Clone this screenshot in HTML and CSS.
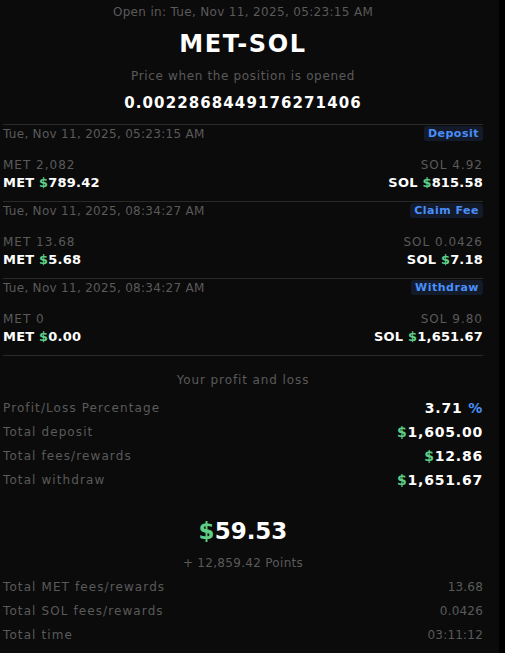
FILE: index.html
```html
<!DOCTYPE html>
<html>
<head>
<meta charset="utf-8">
<link rel="stylesheet" href="styles.css">
</head>
<body>
<div class="page">
  <div class="panel">
    <div class="open">Open in: Tue, Nov 11, 2025, 05:23:15 AM</div>
    <div class="pair">MET-SOL</div>
    <div class="label">Price when the position is opened</div>
    <div class="price">0.0022868449176271406</div>

    <div class="tx">
      <div class="tx-head"><span class="date">Tue, Nov 11, 2025, 05:23:15 AM</span><span class="badge">Deposit</span></div>
      <div class="tx-row small"><span>MET 2,082</span><span>SOL 4.92</span></div>
      <div class="tx-row big"><span>MET <b class="usd">$</b>789.42</span><span>SOL <b class="usd">$</b>815.58</span></div>
    </div>
    <div class="tx">
      <div class="tx-head"><span class="date">Tue, Nov 11, 2025, 08:34:27 AM</span><span class="badge">Claim Fee</span></div>
      <div class="tx-row small"><span>MET 13.68</span><span>SOL 0.0426</span></div>
      <div class="tx-row big"><span>MET <b class="usd">$</b>5.68</span><span>SOL <b class="usd">$</b>7.18</span></div>
    </div>
    <div class="tx last">
      <div class="tx-head"><span class="date">Tue, Nov 11, 2025, 08:34:27 AM</span><span class="badge">Withdraw</span></div>
      <div class="tx-row small"><span>MET 0</span><span>SOL 9.80</span></div>
      <div class="tx-row big"><span>MET <b class="usd">$</b>0.00</span><span>SOL <b class="usd">$</b>1,651.67</span></div>
    </div>

    <div class="section-title">Your profit and loss</div>
    <div class="stats">
      <div class="stat"><span class="k">Profit/Loss Percentage</span><span class="v">3.71 <b class="pct">%</b></span></div>
      <div class="stat"><span class="k">Total deposit</span><span class="v"><b class="usd">$</b>1,605.00</span></div>
      <div class="stat"><span class="k">Total fees/rewards</span><span class="v"><b class="usd">$</b>12.86</span></div>
      <div class="stat"><span class="k">Total withdraw</span><span class="v"><b class="usd">$</b>1,651.67</span></div>
    </div>

    <div class="pnl"><b class="usd">$</b>59.53</div>
    <div class="points">+ 12,859.42 Points</div>
    <div class="stats">
      <div class="stat"><span class="k">Total MET fees/rewards</span><span class="vg">13.68</span></div>
      <div class="stat"><span class="k">Total SOL fees/rewards</span><span class="vg">0.0426</span></div>
      <div class="stat"><span class="k">Total time</span><span class="vg">03:11:12</span></div>
    </div>
  </div>
  <div class="strip"></div>
</div>
</body>
</html>
```
FILE: styles.css
```css
html, body {
  margin: 0;
  padding: 0;
  background: #000;
  height: 100%;
}
body {
  font-family: "DejaVu Sans", "Verdana", sans-serif;
  color: #5a5a5a;
  overflow: hidden;
}
.page {
  display: flex;
  width: 505px;
  height: 653px;
}
.panel {
  width: 480px;
  padding: 0 16px 0 3px;
  background: #0b0b0b;
  flex: none;
}
.strip {
  flex: 1;
  background: #000;
}
.open {
  text-align: center;
  font-size: 12px;
  letter-spacing: 0.33px;
  line-height: 24px;
}
.pair {
  text-align: center;
  color: #fff;
  font-size: 24px;
  font-weight: bold;
  line-height: 40px;
  letter-spacing: 1.6px;
}
.label {
  text-align: center;
  font-size: 12px;
  letter-spacing: 0.65px;
  line-height: 24px;
}
.price {
  text-align: center;
  color: #fff;
  font-size: 15px;
  font-weight: bold;
  letter-spacing: 1.1px;
  line-height: 30px;
  margin-bottom: 6px;
}
.tx {
  border-top: 1px solid #2a2a2a;
  padding-bottom: 9px;
}
.tx.last {
  border-bottom: 1px solid #2a2a2a;
}
.tx-head {
  display: flex;
  justify-content: space-between;
  align-items: center;
  height: 17px;
  margin-bottom: 14px;
}
.date {
  font-size: 12px;
  letter-spacing: 0.3px;
}
.badge {
  background: #131b2b;
  color: #4a8ef7;
  font-size: 11px;
  font-weight: bold;
  letter-spacing: 0.5px;
  line-height: 15px;
  padding: 0 4px;
  border-radius: 3px;
}
.tx-row {
  display: flex;
  justify-content: space-between;
  line-height: 18px;
}
.tx-row.small {
  font-size: 12px;
  letter-spacing: 1px;
}
.tx-row.big {
  color: #fff;
  font-size: 13px;
  font-weight: bold;
  letter-spacing: 0.2px;
}
.usd {
  color: #5fcf87;
  font-weight: bold;
}
.pct {
  color: #4a8ef7;
}
.section-title {
  text-align: center;
  font-size: 12px;
  letter-spacing: 0.9px;
  line-height: 24px;
  margin-top: 12px;
  margin-bottom: 4px;
}
.stat {
  display: flex;
  justify-content: space-between;
  align-items: center;
  height: 24px;
}
.k {
  font-size: 12px;
  letter-spacing: 1.1px;
}
.v {
  color: #fff;
  font-size: 14px;
  font-weight: bold;
  letter-spacing: 0.8px;
}
.vg {
  font-size: 12px;
  letter-spacing: 0.2px;
}
.pnl {
  text-align: center;
  color: #fff;
  font-size: 23px;
  font-weight: bold;
  line-height: 40px;
  margin-top: 19px;
}
.points {
  text-align: center;
  font-size: 12px;
  letter-spacing: 0.3px;
  line-height: 24px;
}
```
